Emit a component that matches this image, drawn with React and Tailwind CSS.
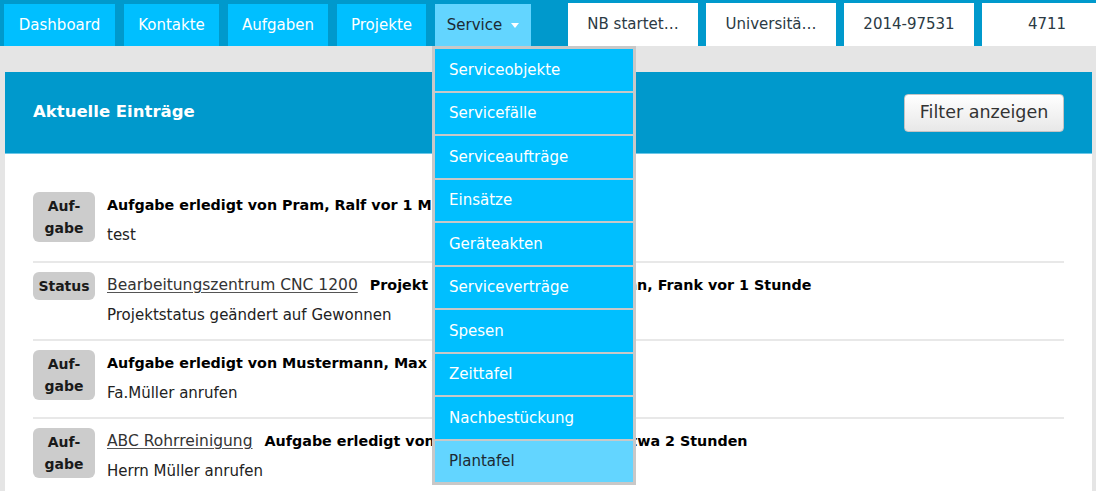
import React from 'react';

const leftTabs = [
  { label: 'Dashboard', w: 'w-[111px]' },
  { label: 'Kontakte', w: 'w-[95px]' },
  { label: 'Aufgaben', w: 'w-[100px]' },
  { label: 'Projekte', w: 'w-[89px]' },
];

const rightTabs = ['NB startet…', 'Universitä…', '2014-97531', '4711'];

const menuItems = [
  'Serviceobjekte',
  'Servicefälle',
  'Serviceaufträge',
  'Einsätze',
  'Geräteakten',
  'Serviceverträge',
  'Spesen',
  'Zeittafel',
  'Nachbestückung',
  'Plantafel',
];

const entries = [
  { badge: ['Auf-', 'gabe'], title: 'Aufgabe erledigt von Pram, Ralf vor 1 Minute', text: 'test' },
  { badge: ['Status'], link: 'Bearbeitungszentrum CNC 1200', title: 'Projekt geändert von Mustermann, Frank vor 1 Stunde', text: 'Projektstatus geändert auf Gewonnen' },
  { badge: ['Auf-', 'gabe'], title: 'Aufgabe erledigt von Mustermann, Max vor 1 Stunde', text: 'Fa.Müller anrufen' },
  { badge: ['Auf-', 'gabe'], link: 'ABC Rohrreinigung', title: 'Aufgabe erledigt von Mustermann, Max vor etwa 2 Stunden', text: 'Herrn Müller anrufen' },
];

function Entry({ entry, first, last }) {
  return (
    <div className={`flex gap-[12px] pt-[9px] ${first ? 'pb-[15px]' : 'pb-[13px]'} ${last ? '' : 'border-b-2 border-[#e8e8e8]'}`}>
      <div className="w-[62px] shrink-0 self-start rounded-[6px] bg-[#cccccc] py-[3px] text-center text-[14px] font-bold leading-[22px] text-[#1a1a1a]">
        {entry.badge.map((b) => (
          <div key={b}>{b}</div>
        ))}
      </div>
      <div className="min-w-0">
        <div className="flex items-baseline gap-[12px] whitespace-nowrap leading-[27px]">
          {entry.link && (
            <a href="#" className="text-[15.5px] text-[#333] underline decoration-[#555] underline-offset-2">{entry.link}</a>
          )}
          <span className="text-[14.3px] font-bold text-black">{entry.title}</span>
        </div>
        <div className="mt-[5px] text-[15px] leading-[22px] text-[#222]">{entry.text}</div>
      </div>
    </div>
  );
}

export default function App() {
  return (
    <div className="relative h-[491px] w-[1096px] overflow-hidden bg-[#e5e5e5]" style={{ fontFamily: '"DejaVu Sans", Verdana, sans-serif' }}>
      <nav className="flex h-[46px] items-end overflow-hidden bg-[#0099cc] pl-[4px]">
        <div className="flex h-[42px] gap-[9px]">
          {leftTabs.map((t) => (
            <div key={t.label} className={`${t.w} flex items-center justify-center bg-[#00bfff] text-[15px] text-white`}>
              {t.label}
            </div>
          ))}
          <div className="flex w-[96px] items-center justify-center gap-[9px] bg-[#63d5ff] text-[15px] text-[#1c2a33]">
            Service
            <svg width="8" height="5" viewBox="0 0 8 5"><path d="M0 0h8L4 5z" fill="#fff" /></svg>
          </div>
        </div>
        <div className="ml-[37px] flex h-[43px] shrink-0 gap-[8px] self-end">
          {rightTabs.map((t) => (
            <div key={t} className="flex w-[130px] shrink-0 items-center justify-center bg-white text-[15px] text-[#2b3a44]">
              {t}
            </div>
          ))}
        </div>
      </nav>

      <div className="mt-[26px] ml-[5px] mr-[4px] bg-white">
        <div className="flex h-[82px] items-center justify-between border-b border-[#6cc7e8] bg-[#0099cc] px-[28px]">
          <h2 className="text-[16.5px] font-bold text-white">Aktuelle Einträge</h2>
          <button className="h-[38px] w-[160px] rounded-[4px] border border-[#c4c4c4] bg-gradient-to-b from-white to-[#e8e8e8] text-[17.5px] text-[#333]">
            Filter anzeigen
          </button>
        </div>
        <div className="px-[28px] pt-[29px]">
          {entries.map((e, i) => (
            <Entry key={i} entry={e} first={i === 0} last={i === entries.length - 1} />
          ))}
        </div>
      </div>

      <div className="absolute left-[432px] top-[46px] w-[204px] border-[3px] border-[#c8c8c8] bg-[#c8c8c8]">
        <div className="flex flex-col gap-[2px]">
          {menuItems.map((m) => (
            <div
              key={m}
              className={`flex h-[41.5px] items-center pl-[14px] text-[15px] ${m === 'Plantafel' ? 'bg-[#63d5ff] text-[#1c2a33]' : 'bg-[#00bfff] text-white'}`}
            >
              {m}
            </div>
          ))}
        </div>
      </div>
    </div>
  );
}
